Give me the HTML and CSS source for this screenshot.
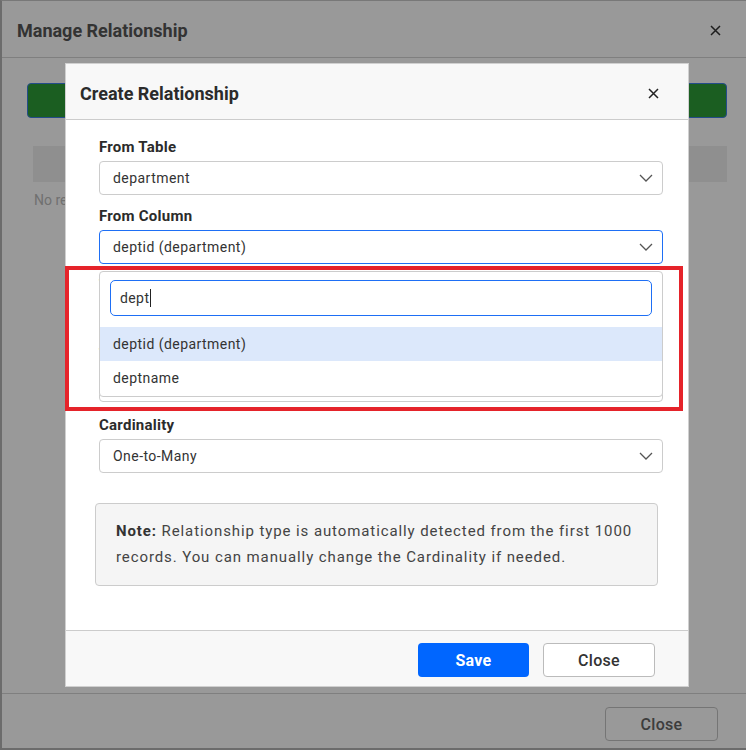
FILE: index.html
```html
<!DOCTYPE html>
<html>
<head>
    <title>Manage Relationship</title>
    <meta http-equiv="Content-Type" content="text/html;charset=utf-8"/>
    <link rel="stylesheet" href="styles.css">
</head>
<body>
<div class="window">
    <div class="win-head">
        <h1>Manage Relationship</h1>
        <span class="x-icon"><svg width="11" height="11" viewBox="0 0 11 11"><path d="M1 1L10 10M10 1L1 10" stroke="#333" stroke-width="1.5"/></svg></span>
    </div>
    <div class="win-body">
        <div class="add-btn"></div>
        <div class="grid-head"></div>
        <div class="empty">No records found</div>
    </div>
    <div class="win-foot">
        <button class="btn btn-gray">Close</button>
    </div>
</div>

<div class="backdrop"></div>

<div class="modal">
    <div class="modal-head">
        <h2>Create Relationship</h2>
        <span class="x-icon"><svg width="11" height="11" viewBox="0 0 11 11"><path d="M1 1L10 10M10 1L1 10" stroke="#222" stroke-width="1.5"/></svg></span>
    </div>
    <div class="modal-body">
        <div class="field">
            <label>From Table</label>
            <div class="select">department<svg class="chev" width="14" height="8" viewBox="0 0 14 8"><path d="M1 1L7 7L13 1" fill="none" stroke="#555" stroke-width="1.3"/></svg></div>
        </div>
        <div class="field drop-host">
            <label>From Column</label>
            <div class="select focus">deptid (department)<svg class="chev" width="14" height="8" viewBox="0 0 14 8"><path d="M1 1L7 7L13 1" fill="none" stroke="#555" stroke-width="1.3"/></svg></div>
            <div class="dropdown">
                <div class="search">dept<span class="caret"></span></div>
                <div class="option active">deptid (department)</div>
                <div class="option">deptname</div>
            </div>
        </div>
        <div class="field">
            <label>To Table</label>
            <div class="select">employee<svg class="chev" width="14" height="8" viewBox="0 0 14 8"><path d="M1 1L7 7L13 1" fill="none" stroke="#555" stroke-width="1.3"/></svg></div>
        </div>
        <div class="field">
            <label>To Column</label>
            <div class="select">deptid<svg class="chev" width="14" height="8" viewBox="0 0 14 8"><path d="M1 1L7 7L13 1" fill="none" stroke="#555" stroke-width="1.3"/></svg></div>
        </div>
        <div class="field card">
            <label>Cardinality</label>
            <div class="select">One-to-Many<svg class="chev" width="14" height="8" viewBox="0 0 14 8"><path d="M1 1L7 7L13 1" fill="none" stroke="#555" stroke-width="1.3"/></svg></div>
        </div>
        <div class="note">
            <b>Note:</b> Relationship type is automatically detected from the first 1000 records. You can manually change the Cardinality if needed.
        </div>
    </div>
    <div class="modal-foot">
        <button class="btn btn-save">Save</button>
        <button class="btn btn-close">Close</button>
    </div>
    <div class="mark"></div>
</div>
</body>
</html>
```
FILE: styles.css
```css
* { box-sizing: border-box; }
body {
    margin: 0;
    padding: 0;
    width: 746px;
    height: 750px;
    overflow: hidden;
    background: #fff;
    font-family: Roboto, "Liberation Sans", sans-serif;
    color: #333;
}

/* outer window (behind backdrop) */
.window {
    width: 760px;
    height: 750px;
    display: flex;
    flex-direction: column;
    border-left: 2px solid #b4b4b4;
    border-top: 1px solid #c8c8c8;
    border-bottom: 2px solid #b4b4b4;
    background: #fff;
}
.win-head {
    height: 57px;
    display: flex;
    align-items: center;
    justify-content: space-between;
    padding: 2px 40px 0 15px;
    border-bottom: 1px solid #d4d4d4;
}
.win-head h1 {
    margin: 0;
    font-size: 18px;
    font-weight: 700;
    color: #555;
}
.win-head .x-icon { display: flex; margin-right: -1px; }
.win-body {
    flex: 1;
    padding: 25px 0 0 25px;
}
.add-btn {
    width: 700px;
    height: 35px;
    background: #2e9d38;
    border: 1px solid #3d7fe6;
    border-radius: 4px;
}
.grid-head {
    width: 694px;
    height: 36px;
    margin: 28px 0 0 6px;
    background: #eee;
}
.empty {
    margin: 8px 0 0 7px;
    font-size: 14px;
    line-height: 20px;
    color: #bbb;
}
.win-foot {
    height: 55px;
    border-top: 1px solid #d4d4d4;
    padding: 13px 0 0 603px;
}
.btn {
    font-family: Roboto, "Liberation Sans", sans-serif;
    font-size: 16px;
    height: 34px;
    border-radius: 4px;
    cursor: pointer;
    letter-spacing: 0.3px;
}
.btn-gray {
    width: 113px;
    background: #fff;
    border: 1px solid #c4c4c4;
    color: #666;
    font-weight: 500;
}

.backdrop {
    position: fixed;
    left: 0; top: 0; right: 0; bottom: 0;
    background: rgba(0,0,0,0.4);
}

/* modal */
.modal {
    position: absolute;
    left: 65px;
    top: 63px;
    width: 624px;
    height: 624px;
    background: #fff;
    border: 1px solid #d0d0d0;
    display: flex;
    flex-direction: column;
}
.modal-head {
    height: 56px;
    flex: none;
    background: #f8f8f8;
    border-bottom: 1px solid #ccc;
    display: flex;
    align-items: center;
    justify-content: space-between;
    padding: 3px 29px 0 14px;
}
.modal-head h2 {
    margin: 0;
    font-size: 18px;
    font-weight: 700;
    color: #2b2b2b;
}
.modal-head .x-icon { display: flex; }
.modal-body {
    flex: 1;
    padding: 16px 25px 0 33px;
}
.field { margin-bottom: 10px; }
.field.card { margin-top: 12px; }
.field label {
    display: block;
    font-size: 15px;
    font-weight: 700;
    line-height: 20px;
    letter-spacing: 0.25px;
    padding-top: 1px;
    margin-bottom: 4px;
    color: #2b2b2b;
}
.select {
    height: 34px;
    border: 1px solid #ccc;
    border-radius: 4px;
    display: flex;
    align-items: center;
    justify-content: space-between;
    padding: 0 9px 0 13px;
    font-size: 14px;
    letter-spacing: 0.45px;
    color: #333;
}
.select.focus { border-color: #1e6ff5; }
.drop-host { position: relative; }
.dropdown {
    position: absolute;
    left: 0;
    right: 0;
    top: calc(100% + 7px);
    background: #fff;
    border: 1px solid #ccc;
    border-radius: 4px;
    padding: 8px 0 1px;
    z-index: 2;
}
.search {
    height: 36px;
    margin: 0 10px 11px;
    border: 1px solid #1e6ff5;
    border-radius: 5px;
    padding: 0 9px;
    display: flex;
    align-items: center;
    font-size: 14px;
    letter-spacing: 0.4px;
    color: #333;
}
.caret {
    display: inline-block;
    width: 1px;
    height: 18px;
    background: #222;
    margin-left: 1px;
}
.option {
    height: 34px;
    line-height: 34px;
    padding-left: 13px;
    font-size: 14px;
    letter-spacing: 0.45px;
    color: #333;
}
.option.active { background: #dce8fb; }
.note {
    margin: 30px 5px 0 -4px;
    height: 83px;
    background: #f5f5f5;
    border: 1px solid #ccc;
    border-radius: 4px;
    padding: 14px 10px 0 20px;
    font-size: 15px;
    letter-spacing: 0.9px;
    line-height: 26px;
    color: #444;
}
.note b { color: #333; }
.modal-foot {
    height: 56px;
    flex: none;
    background: #f8f8f8;
    border-top: 1px solid #ccc;
    display: flex;
    justify-content: flex-end;
    gap: 14px;
    padding: 12px 33px 0 0;
}
.btn-save {
    width: 111px;
    background: #0066ff;
    border: none;
    color: #fff;
    font-weight: 700;
}
.btn-close {
    width: 112px;
    background: #fff;
    border: 1px solid #bbb;
    color: #333;
    font-weight: 500;
}
.mark {
    position: absolute;
    left: -1px;
    top: 202px;
    width: 618px;
    height: 145px;
    border: 4px solid #e5232a;
    pointer-events: none;
    z-index: 3;
}
```
